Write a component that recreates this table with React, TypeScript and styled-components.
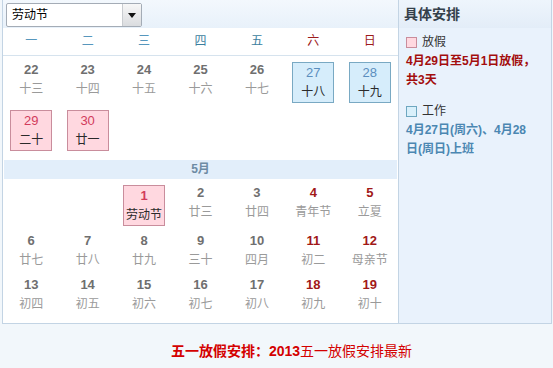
import React from "react";
import styled, { createGlobalStyle } from "styled-components";

const Global = createGlobalStyle`
  html, body { margin: 0; padding: 0; background: #f2f7fb; }
  body { font-family: "Liberation Sans", "Noto Sans CJK SC", sans-serif; }
`;

const CJK = `"Liberation Sans", "Noto Sans CJK SC", sans-serif`;

const Page = styled.div`
  width: 553px;
  height: 368px;
  background: #f2f7fb;
  box-sizing: border-box;
  padding-left: 2px;
`;

const Frame = styled.div`
  width: 550px;
  box-sizing: border-box;
  border: 1px solid #c3d4e4;
  border-top: none;
  display: flex;
  background: #fff;
`;

const Left = styled.div`
  width: 395px;
  display: flex;
  flex-direction: column;
  padding-bottom: 4px;
`;

const TopBar = styled.div`
  height: 28px;
  box-sizing: border-box;
  padding: 3px 0 0 3px;
  background: linear-gradient(#f3f8fd, #e8f1fa);
`;

const Select = styled.div`
  width: 136px;
  height: 24px;
  box-sizing: border-box;
  border: 1px solid #a4acb6;
  border-radius: 2px;
  background: #fff;
  display: flex;
  align-items: stretch;
`;

const SelectText = styled.div`
  flex: 1;
  padding-left: 5px;
  font: 12px/22px ${CJK};
  color: #000;
`;

const SelectBtn = styled.div`
  width: 18px;
  border-left: 1px solid #c9ccd0;
  background: linear-gradient(#f7f7f7, #dadcdf);
  display: flex;
  align-items: center;
  justify-content: center;
`;

const Triangle = styled.div`
  width: 0;
  height: 0;
  border-left: 4px solid transparent;
  border-right: 4px solid transparent;
  border-top: 5px solid #111;
`;

const WeekRow = styled.div`
  display: grid;
  grid-template-columns: repeat(7, 1fr);
  height: 27px;
  border-bottom: 1px solid #d6e3ee;
  align-items: center;
`;

const WeekDay = styled.div<{ $tone: "light" | "dark" | "red" }>`
  text-align: center;
  font: 12px/27px ${CJK};
  color: ${(p) =>
    p.$tone === "red" ? "#9c1b1b" : p.$tone === "dark" ? "#3c7e9e" : "#5797bd"};
`;

const Grid = styled.div<{ $top: number }>`
  display: grid;
  grid-template-columns: repeat(7, 1fr);
  padding-top: ${(p) => p.$top}px;
`;

const Cell = styled.div`
  display: flex;
  flex-direction: column;
  align-items: center;
  padding: 1px 0 5px;
`;

const Box = styled.div<{ $kind: "holiday" | "work" }>`
  width: 42px;
  height: 41px;
  box-sizing: border-box;
  margin-top: 1px;
  padding-top: 1px;
  border: 1px solid ${(p) => (p.$kind === "holiday" ? "#c98d9c" : "#79a9c3")};
  background: ${(p) => (p.$kind === "holiday" ? "#ffd8e0" : "#d6edfb")};
  display: flex;
  flex-direction: column;
  align-items: center;
`;

type Tone = "normal" | "weekend" | "holiday" | "holidayStrong" | "work";

const Num = styled.div<{ $tone: Tone }>`
  font-family: "Liberation Sans", Arial, sans-serif;
  font-size: 13px;
  line-height: 18px;
  font-weight: ${(p) =>
    p.$tone === "holiday" || p.$tone === "work" ? "normal" : "bold"};
  color: ${(p) =>
    p.$tone === "weekend"
      ? "#a11818"
      : p.$tone === "holiday" || p.$tone === "holidayStrong"
      ? "#d23c5c"
      : p.$tone === "work"
      ? "#5b8ebe"
      : "#6f6f6f"};
`;

const Lunar = styled.div<{ $dark?: boolean }>`
  font: 12px/20px ${CJK};
  color: ${(p) => (p.$dark ? "#2a2a2a" : "#9a9a9a")};
  white-space: nowrap;
`;

const Band = styled.div`
  margin: 4px 1px 0;
  height: 19px;
  background: #e2eefa;
  text-align: center;
  font: bold 12px/19px ${CJK};
  color: #6d8ba4;
`;

const Sidebar = styled.div`
  flex: 1;
  border-left: 1px solid #c3d4e4;
  display: flex;
  flex-direction: column;
  background: #e9f2fc;
`;

const SideHead = styled.div`
  height: 28px;
  box-sizing: border-box;
  padding-left: 5px;
  background: linear-gradient(#eef5fc, #e3edf8);
  font: bold 14px/28px ${CJK};
  color: #34404b;
`;

const SideBody = styled.div`
  flex: 1;
  padding: 7px 13px 0 7px;
`;

const Legend = styled.div`
  display: flex;
  align-items: center;
  gap: 5px;
  font: 12px/14px ${CJK};
  color: #333;
`;

const Swatch = styled.span<{ $kind: "holiday" | "work" }>`
  width: 11px;
  height: 11px;
  box-sizing: border-box;
  border: 1px solid ${(p) => (p.$kind === "holiday" ? "#c98d9c" : "#6ea7c0")};
  background: ${(p) => (p.$kind === "holiday" ? "#ffd8e0" : "#d9f0fb")};
`;

const Note = styled.div<{ $kind: "holiday" | "work"; $gap: number }>`
  margin-top: 3px;
  margin-bottom: ${(p) => p.$gap}px;
  font: bold 12px/19px ${CJK};
  color: ${(p) => (p.$kind === "holiday" ? "#a30d0d" : "#4b87b2")};
  word-break: break-all;
`;

const Footer = styled.div`
  padding: 17px 0 0 28px;
  text-align: center;
  font: 14px/20px ${CJK};
  color: #d40000;
`;

const Strong = styled.b`
  font-weight: bold;
`;

type Day = {
  n: number;
  l: string;
  tone?: Tone;
  box?: "holiday" | "work";
} | null;

const april: Day[] = [
  { n: 22, l: "十三" },
  { n: 23, l: "十四" },
  { n: 24, l: "十五" },
  { n: 25, l: "十六" },
  { n: 26, l: "十七" },
  { n: 27, l: "十八", tone: "work", box: "work" },
  { n: 28, l: "十九", tone: "work", box: "work" },
  { n: 29, l: "二十", tone: "holiday", box: "holiday" },
  { n: 30, l: "廿一", tone: "holiday", box: "holiday" },
  null, null, null, null, null,
];

const may: Day[] = [
  null,
  null,
  { n: 1, l: "劳动节", tone: "holidayStrong", box: "holiday" },
  { n: 2, l: "廿三" },
  { n: 3, l: "廿四" },
  { n: 4, l: "青年节", tone: "weekend" },
  { n: 5, l: "立夏", tone: "weekend" },
  { n: 6, l: "廿七" },
  { n: 7, l: "廿八" },
  { n: 8, l: "廿九" },
  { n: 9, l: "三十" },
  { n: 10, l: "四月" },
  { n: 11, l: "初二", tone: "weekend" },
  { n: 12, l: "母亲节", tone: "weekend" },
  { n: 13, l: "初四" },
  { n: 14, l: "初五" },
  { n: 15, l: "初六" },
  { n: 16, l: "初七" },
  { n: 17, l: "初八" },
  { n: 18, l: "初九", tone: "weekend" },
  { n: 19, l: "初十", tone: "weekend" },
];

const weekdays: { t: string; tone: "light" | "dark" | "red" }[] = [
  { t: "一", tone: "light" },
  { t: "二", tone: "light" },
  { t: "三", tone: "light" },
  { t: "四", tone: "dark" },
  { t: "五", tone: "dark" },
  { t: "六", tone: "red" },
  { t: "日", tone: "red" },
];

function DayCell({ d }: { d: Day }) {
  if (!d) return <Cell />;
  const tone = d.tone ?? "normal";
  if (d.box) {
    return (
      <Cell>
        <Box $kind={d.box}>
          <Num $tone={tone}>{d.n}</Num>
          <Lunar $dark>{d.l}</Lunar>
        </Box>
      </Cell>
    );
  }
  return (
    <Cell>
      <Num $tone={tone}>{d.n}</Num>
      <Lunar>{d.l}</Lunar>
    </Cell>
  );
}

export default function App() {
  return (
    <Page>
      <Global />
      <Frame>
        <Left>
          <TopBar>
            <Select>
              <SelectText>劳动节</SelectText>
              <SelectBtn>
                <Triangle />
              </SelectBtn>
            </Select>
          </TopBar>
          <WeekRow>
            {weekdays.map((w) => (
              <WeekDay key={w.t} $tone={w.tone}>
                {w.t}
              </WeekDay>
            ))}
          </WeekRow>
          <Grid $top={4}>
            {april.map((d, i) => (
              <DayCell key={i} d={d} />
            ))}
          </Grid>
          <Band>5月</Band>
          <Grid $top={4}>
            {may.map((d, i) => (
              <DayCell key={i} d={d} />
            ))}
          </Grid>
        </Left>
        <Sidebar>
          <SideHead>具体安排</SideHead>
          <SideBody>
            <Legend>
              <Swatch $kind="holiday" />
              放假
            </Legend>
            <Note $kind="holiday" $gap={14}>
              4月29日至5月1日放假，共3天
            </Note>
            <Legend>
              <Swatch $kind="work" />
              工作
            </Legend>
            <Note $kind="work" $gap={0}>
              4月27日(周六)、4月28日(周日)上班
            </Note>
          </SideBody>
        </Sidebar>
      </Frame>
      <Footer>
        <Strong>五一放假安排：2013</Strong>五一放假安排最新
      </Footer>
    </Page>
  );
}
